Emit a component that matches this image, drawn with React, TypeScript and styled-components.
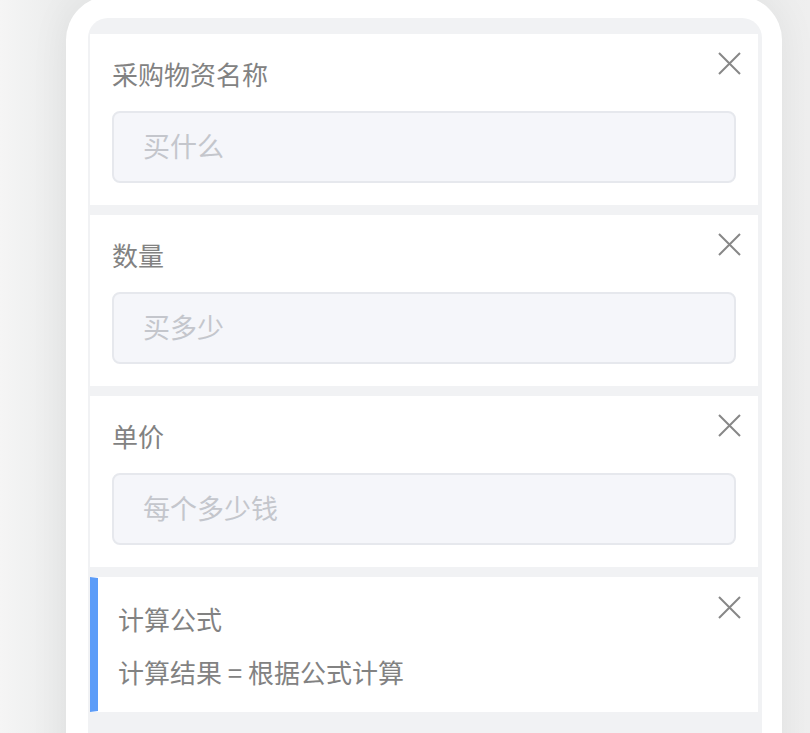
import React from "react";
import styled, { createGlobalStyle } from "styled-components";

const GlobalStyle = createGlobalStyle`
  html, body {
    margin: 0;
    padding: 0;
    background: #f1f2f2;
    overflow: hidden;
  }
  * { box-sizing: border-box; }
  body {
    font-family: "Noto Sans CJK SC", "Noto Sans", sans-serif;
  }
`;

const Page = styled.div`
  width: 810px;
  height: 733px;
  overflow: hidden;
  padding-left: 66px;
  background: linear-gradient(90deg, #f5f5f5 0%, #ebecec 8%, #ebecec 92%, #efefef 100%);
`;

const Frame = styled.div`
  width: 716px;
  min-height: 760px;
  margin-top: -4px;
  background: #ffffff;
  border-radius: 44px 44px 0 0;
  padding: 22px 20px 0 22px;
  box-shadow: 0 0 40px rgba(0, 0, 0, 0.06);
`;

const Panel = styled.div`
  background: #f1f2f4;
  border-radius: 20px 20px 0 0;
  padding: 16px 4px 40px 2px;
  display: flex;
  flex-direction: column;
  gap: 10px;
  min-height: 760px;
`;

const Card = styled.div<{ $accent?: boolean }>`
  position: relative;
  flex: none;
  background: #ffffff;
  display: flex;
  flex-direction: column;
  padding: ${(p) => (p.$accent ? "22.5px 20px 21px 20px" : "22px 22px 22px 22px")};
  gap: ${(p) => (p.$accent ? "17px" : "19px")};
  border-left: ${(p) => (p.$accent ? "8px solid #5c9cf8" : "none")};
  ${(p) => (p.$accent ? "border-top: 1.5px solid #fff; border-bottom: 1.5px solid #fff;" : "")}
`;

const Label = styled.div`
  font-size: 26px;
  line-height: 36px;
  height: 36px;
  color: #828282;
`;

const Formula = styled.div`
  font-size: 26px;
  line-height: 36px;
  height: 36px;
  color: #828282;
  white-space: pre;
`;

const Field = styled.input`
  flex: none;
  width: 624px;
  height: 72px;
  border: 2px solid #e6e8ed;
  border-radius: 8px;
  background: #f5f6fa;
  padding: 0 20px 3px 29px;
  font-family: "Noto Sans CJK SC", "Noto Sans", sans-serif;
  font-size: 27px;
  color: #555;
  outline: none;
  &::placeholder {
    color: #c4c6cc;
  }
`;

const CloseButton = styled.button`
  position: absolute;
  top: 18px;
  right: 17px;
  width: 23px;
  height: 23px;
  padding: 0;
  border: none;
  background: transparent;
  display: flex;
  align-items: center;
  justify-content: center;
  cursor: pointer;
`;

const CloseIcon = () => (
  <svg width="23" height="23" viewBox="0 0 23 23">
    <path d="M1 1 L22 22 M22 1 L1 22" stroke="#878787" strokeWidth="2" fill="none" />
  </svg>
);

const fields = [
  { label: "采购物资名称", placeholder: "买什么" },
  { label: "数量", placeholder: "买多少" },
  { label: "单价", placeholder: "每个多少钱" },
];

export default function App() {
  return (
    <>
      <GlobalStyle />
      <Page>
        <Frame>
          <Panel>
            {fields.map((f) => (
              <Card key={f.label}>
                <CloseButton aria-label="删除">
                  <CloseIcon />
                </CloseButton>
                <Label>{f.label}</Label>
                <Field placeholder={f.placeholder} />
              </Card>
            ))}
            <Card $accent>
              <CloseButton aria-label="删除">
                <CloseIcon />
              </CloseButton>
              <Label>计算公式</Label>
              <Formula>计算结果 = 根据公式计算</Formula>
            </Card>
          </Panel>
        </Frame>
      </Page>
    </>
  );
}
